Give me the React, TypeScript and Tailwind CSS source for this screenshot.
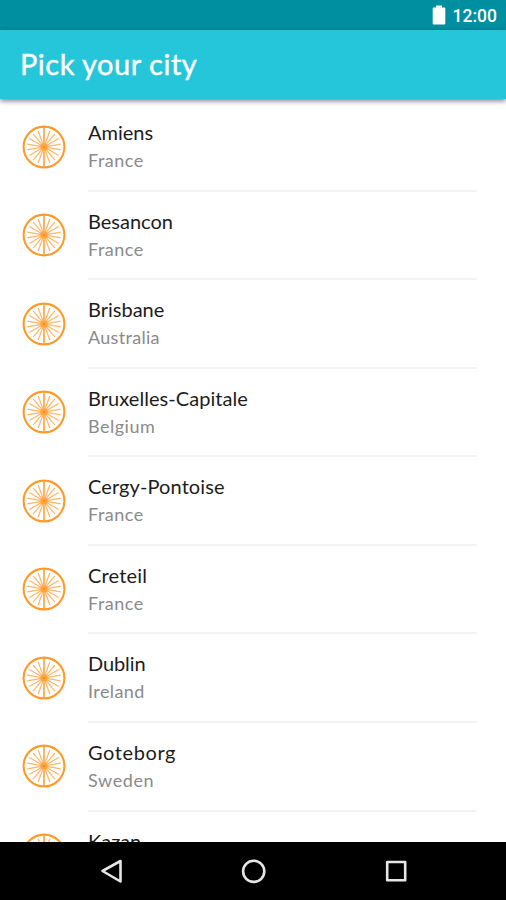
import React from "react";

const cities = [
  { name: "Amiens", country: "France", spacing: "tracking-[0px]", countrySpacing: "tracking-[0.5px]" },
  { name: "Besancon", country: "France", spacing: "tracking-[0px]", countrySpacing: "tracking-[0.5px]" },
  { name: "Brisbane", country: "Australia", spacing: "tracking-[0px]", countrySpacing: "tracking-[0.3px]" },
  { name: "Bruxelles-Capitale", country: "Belgium", spacing: "tracking-[0.05px]", countrySpacing: "tracking-[0.5px]" },
  { name: "Cergy-Pontoise", country: "France", spacing: "tracking-[0.1px]", countrySpacing: "tracking-[0.5px]" },
  { name: "Creteil", country: "France", spacing: "tracking-[0.2px]", countrySpacing: "tracking-[0.5px]" },
  { name: "Dublin", country: "Ireland", spacing: "tracking-[-0.1px]", countrySpacing: "tracking-[0.4px]" },
  { name: "Goteborg", country: "Sweden", spacing: "tracking-[0.6px]", countrySpacing: "tracking-[0.6px]" },
  { name: "Kazan", country: "", spacing: "tracking-[0px]", countrySpacing: "" },
];

const spokes = Array.from({ length: 18 }, (_, i) => i * 20);

const Wheel = () => {
  return (
    <svg className="mt-[21.5px] h-11 w-11 shrink-0" viewBox="0 0 44 44" fill="none" stroke="#ff9a28">
      <circle cx="22" cy="22" r="20.4" strokeWidth="2.1" />
      {spokes.map((angle) => (
        <line
          key={angle}
          x1="22"
          y1={angle % 180 === 0 ? 2 : 5}
          x2="22"
          y2="18"
          stroke={angle % 180 === 0 ? "#ffa03a" : "#ffb566"}
          strokeWidth={angle % 180 === 0 ? 1.6 : 1.2}
          transform={`rotate(${angle} 22 22)`}
        />
      ))}
      <circle cx="22" cy="22" r="4.2" fill="#ffa53f" stroke="#ffc27a" strokeWidth="1" />
      <circle cx="22" cy="22" r="1.2" fill="#ff8f14" stroke="none" />
    </svg>
  );
};

const App = () => {
  return (
    <div className="flex h-[900px] w-[506px] flex-col overflow-hidden bg-white font-['Lato',sans-serif]">
      <div className="flex h-[30px] shrink-0 items-center justify-end bg-[#008fa1] pr-[9px]">
        <svg className="mr-[7px] h-5 w-[14px]" viewBox="0 0 14 20" fill="#fff">
          <path d="M4 .5h6v2h2.300q1 0 1 1v15q0 1-1 1H1.700q-1 0-1-1v-15q0-1 1-1H4z" />
        </svg>
        <span className="pt-[2px] font-['Roboto',sans-serif] text-[17.5px] font-medium leading-5 text-white">12:00</span>
      </div>
      <div className="z-10 flex h-[69px] shrink-0 items-center bg-[#26c6da] pl-[20px] shadow-[0_2px_5px_rgba(0,0,0,0.5)]">
        <h1 className="pb-[2px] text-[29px] leading-9 tracking-[0.5px] text-white [-webkit-text-stroke:0.4px_white]">Pick your city</h1>
      </div>
      <div className="min-h-0 flex-1 overflow-hidden pt-[4px]">
        {cities.map((city) => (
          <div key={city.name} className="flex h-[88.57px] pl-[22px] pr-[29px]">
            <Wheel />
            <div className="ml-[22px] flex-1 border-b-2 border-[#f3f3f3] pt-[15px]">
              <p className={`text-[20px] leading-7 text-[#1c1c1c] ${city.spacing}`}>{city.name}</p>
              {city.country && (
                <p className={`text-[18px] leading-7 text-[#8a8a8a] ${city.countrySpacing}`}>{city.country}</p>
              )}
            </div>
          </div>
        ))}
      </div>
      <div className="flex h-[58px] shrink-0 items-center justify-center bg-black">
        <svg className="h-[58px] w-[506px]" viewBox="0 0 506 58" fill="none" stroke="#e6e6e6" strokeWidth="2.6" strokeLinejoin="round">
          <path d="M102.5 29L120.5 19v20.5z" />
          <circle cx="253.7" cy="29.3" r="10.6" />
          <rect x="387.2" y="20" width="18" height="18.2" />
        </svg>
      </div>
    </div>
  );
};

export default App;
